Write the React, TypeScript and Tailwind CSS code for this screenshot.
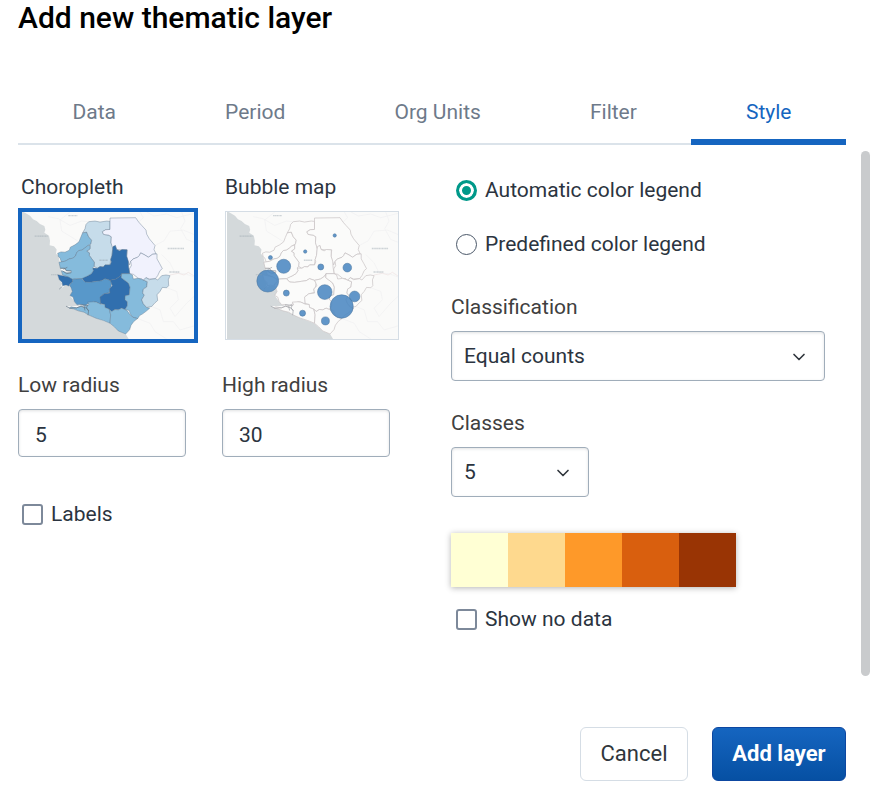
import { useState, type ReactNode } from "react";
import { ChevronDown } from "lucide-react";

type District = { name: string; fill: string; points: string };

const MID = "#85bbdc";
const DARK = "#316fae";
const LIGHT = "#c6dcea";
const PALE = "#f1f2fd";

const districts: District[] = [
  { name: "Kambia", fill: MID, points: "143,161 153,157 165,158 178,152 181,143 195,136 207,127 212,114 218,100 230,98 236,112 245,122 243,133 232,139 224,146 215,152 206,153 200,160 196,170 188,176 178,178 165,185 154,187 150,175 145,171" },
  { name: "Bombali", fill: LIGHT, points: "218,100 225,88 228,75 236,67 255,65 270,68 290,65 300,66 300,90 287,91 277,97 281,105 296,107 304,112 303,130 308,140 308,150 306,168 302,180 300,196 285,196 280,202 270,201 262,206 252,200 253,188 244,176 238,168 238,160 230,155 240,148 240,137 243,132 245,122 236,112 230,98" },
  { name: "Koinadugu", fill: PALE, points: "300,56 377,55 386,68 395,78 408,92 410,104 418,118 435,138 432,150 438,163 428,164 415,173 404,166 392,160 388,168 383,173 370,178 362,185 358,196 353,182 350,170 352,151 335,151 320,150 316,138 308,146 303,130 304,112 296,107 281,105 277,97 287,91 300,90" },
  { name: "Kono", fill: PALE, points: "383,173 388,168 392,160 404,166 415,173 428,164 441,163 441,178 449,192 457,207 450,213 443,228 436,237 418,238 408,234 400,243 395,237 385,236 370,224 359,222 358,208 364,198 362,185 370,178" },
  { name: "Tonkolili", fill: DARK, points: "308,150 309,141 316,138 320,150 329,154 336,150 351,151 350,170 355,185 356,202 359,222 335,222 330,230 318,238 300,242 285,237 275,243 260,245 240,248 225,247 215,235 232,229 244,222 250,213 248,205 262,206 270,201 280,202 285,196 300,196 304,187 302,180 306,168" },
  { name: "Port Loko", fill: MID, points: "147,188 165,185 178,178 188,176 196,170 200,160 206,153 215,152 224,146 232,139 240,137 240,148 230,155 238,160 238,168 244,176 253,188 252,200 248,205 250,213 244,222 232,229 215,237 200,237 186,239 172,231 158,226 154,213 170,219 183,219 184,214 170,213 164,206 151,206" },
  { name: "Western Area", fill: DARK, points: "143,225 158,228 175,232 187,239 188,247 180,252 177,259 168,256 158,258 156,248 148,240" },
  { name: "Moyamba", fill: "#5898ca", points: "188,247 187,239 215,237 225,247 240,248 260,245 275,243 285,237 300,242 305,250 303,262 298,268 300,278 283,282 272,290 272,313 259,307 250,306 243,311 233,312 225,318 213,314 201,315 193,305 189,292 180,287 187,275 183,264 179,258 182,251" },
  { name: "Bo", fill: DARK, points: "335,222 334,234 342,240 355,250 360,262 358,285 345,289 345,299 352,306 352,318 345,329 335,325 325,330 315,329 305,335 298,328 285,323 284,314 272,311 270,292 283,282 300,280 298,268 307,258 303,247 300,242 318,238 330,230" },
  { name: "Kenema", fill: MID, points: "335,222 359,222 367,226 370,238 385,236 400,241 412,246 410,262 400,268 398,280 403,286 395,300 400,312 410,323 419,325 410,333 398,342 389,347 383,356 368,352 360,341 358,332 345,329 352,318 352,306 345,299 345,289 358,285 360,262 355,250 342,240 334,234" },
  { name: "Kailahun", fill: LIGHT, points: "400,241 408,234 418,240 436,237 443,241 455,228 468,226 480,228 475,240 476,258 470,264 457,263 450,275 441,285 443,302 435,309 425,320 410,323 400,312 395,300 403,286 398,280 400,268 410,262 412,246" },
  { name: "Bonthe", fill: MID, points: "183,321 200,324 213,319 222,322 225,318 237,315 233,307 250,306 259,307 272,313 284,314 285,323 298,328 302,345 300,370 280,362 258,355 235,345 222,337 205,333 190,327 178,325" },
  { name: "Pujehun", fill: MID, points: "298,328 305,335 315,329 325,330 335,325 345,329 352,333 358,342 368,352 383,356 372,364 363,376 359,389 347,402 325,393 313,381 300,370 302,345" },
];

const bubbles = [
  { x: 361, y: 108, r: 5 },
  { x: 272, y: 156, r: 5 },
  { x: 167, y: 174, r: 6 },
  { x: 207, y: 200, r: 21 },
  { x: 319, y: 202, r: 9 },
  { x: 399, y: 204, r: 13 },
  { x: 159, y: 244, r: 33 },
  { x: 215, y: 280, r: 9 },
  { x: 331, y: 277, r: 22 },
  { x: 421, y: 290, r: 16 },
  { x: 382, y: 320, r: 35 },
  { x: 264, y: 340, r: 9 },
  { x: 333, y: 363, r: 12 },
];

function BaseMap({ title, children }: { title: string; children: ReactNode }) {
  return (
    <svg viewBox="36 38 516 379" preserveAspectRatio="none" role="img" aria-label={title} className="block h-full w-full">
      <rect x="36" y="36" width="516" height="384" fill="#fafaf9" />
      <path
        d="M36 36 L45 40 L60 49 L69 60 L80 65 L90 74 L103 80 L106 91 L103 100 L117 109 L120 124 L119 137 L132 140 L140 150 L138 162 L146 171 L149 188 L152 206 L158 226 L143 225 L148 240 L156 252 L150 268 L165 258 L178 258 L187 275 L180 287 L193 305 L201 315 L213 318 L168 319 L185 326 L222 337 L258 355 L300 371 L325 393 L347 402 L356 417 L36 417 Z"
        fill="#d4d9db"
      />
      <g fill="none" stroke="#f0f0f1" strokeWidth="2">
        <path d="M115 52 L145 58 L180 78 L215 65 L236 67 M180 38 L150 62 L155 95 L180 110 L207 127 M390 38 L400 55 L386 68 M410 38 L432 50 L470 44 L500 55 L552 42 M435 138 L462 124 L480 95 L520 92 L552 105" />
        <path d="M515 38 L525 65 L512 88 L530 120 L552 128 M455 165 L480 190 L495 220 L525 222 L552 232 M470 264 L500 275 L505 300 L480 325 L495 350 L530 310 L552 290 M425 320 L450 330 L460 365 L490 365 L510 390 L552 378 M383 356 L420 370 L435 395 L470 417" />
      </g>
      <path d="M480 226 L505 221 L522 226 L535 218 L552 229" fill="none" stroke="#eee2e3" strokeWidth="2" />
      {children}
      <g fill="none" stroke="#8d9ba5" strokeWidth="4" strokeDasharray="5 1 3 1" opacity="0.4">
        <path d="M175 49 H202 M473 147 H522 M478 217 H509 M268 182 H294" />
        <path d="M74 110 H113 M123 225 H143" strokeWidth="3" />
      </g>
    </svg>
  );
}

function Estuaries({ color }: { color: string }) {
  return (
    <path
      d="M151 206 L164 206 L168 213 L184 214 M160 209 L172 203 M158 214 L170 222 L184 219 M148 268 L157 260 M168 319 L180 325 L200 324 L213 319 L230 325 L235 333 M211 315 L233 316 L229 325 L236 331 L234 346 M222 320 L225 332"
      fill="none"
      stroke={color}
      strokeWidth="2"
    />
  );
}

function ChoroplethMap() {
  return (
    <BaseMap title="Choropleth preview">
      <g stroke="#5c7489" strokeOpacity="0.6" strokeWidth="2" strokeLinejoin="round">
        {districts.map((d) => (
          <polygon key={d.name} points={d.points} fill={d.fill} />
        ))}
      </g>
      <Estuaries color="#647785" />
    </BaseMap>
  );
}

function BubbleMap() {
  return (
    <BaseMap title="Bubble map preview">
      <g fill="#fbfbfa" stroke="#c5bfc1" strokeWidth="2" strokeLinejoin="round">
        {districts.map((d) => (
          <polygon key={d.name} points={d.points} />
        ))}
      </g>
      <Estuaries color="#9b9fa4" />
      <g fill="#4b87c2" fillOpacity="0.88" stroke="#4e779f" strokeOpacity="0.8" strokeWidth="2">
        {bubbles.map((b) => (
          <circle key={`${b.x}-${b.y}`} cx={b.x} cy={b.y} r={b.r} />
        ))}
      </g>
    </BaseMap>
  );
}

const tabs = ["Data", "Period", "Org Units", "Filter", "Style"];

const mapTypes = [
  { name: "Choropleth", map: <ChoroplethMap /> },
  { name: "Bubble map", map: <BubbleMap /> },
];

const palette = ["bg-[#ffffd4]", "bg-[#fed98e]", "bg-[#fe9929]", "bg-[#d95f0e]", "bg-[#993404]"];

function Checkbox({ label }: { label: string }) {
  return (
    <label className="flex items-center gap-2">
      <input
        type="checkbox"
        className="size-[21px] shrink-0 appearance-none rounded-[3px] border-2 border-[#7d899a] bg-white checked:bg-[#00897b]"
      />
      {label}
    </label>
  );
}

function Radio({ label, checked, onChange }: { label: string; checked: boolean; onChange: () => void }) {
  return (
    <label className="flex items-center gap-2">
      <input
        type="radio"
        name="legend"
        checked={checked}
        onChange={onChange}
        className="size-[21px] shrink-0 appearance-none rounded-full border border-[#4a5768] bg-white checked:border-3 checked:border-[#00998a] checked:bg-[#00998a] checked:shadow-[inset_0_0_0_3px_#fff]"
      />
      {label}
    </label>
  );
}

function NumberField({ id, label, value }: { id: string; label: string; value: string }) {
  return (
    <div className="flex w-[168px] flex-col gap-3">
      <label htmlFor={id} className="text-[#404040]">
        {label}
      </label>
      <input
        id={id}
        type="text"
        inputMode="numeric"
        defaultValue={value}
        className="h-12 w-full rounded-[4px] border border-[#a0adba] bg-white px-4 pt-[3px] shadow-[inset_0_1px_3px_rgba(48,54,60,0.15)] outline-none"
      />
    </div>
  );
}

function SelectField({ id, label, options, width }: { id: string; label: string; options: string[]; width: string }) {
  return (
    <div className="flex flex-col gap-3">
      <label htmlFor={id} className="text-[#404040]">
        {label}
      </label>
      <div className={`relative ${width}`}>
        <select
          id={id}
          className="h-[50px] w-full appearance-none rounded-[4px] border border-[#a0adba] bg-white pr-10 pl-3 shadow-[inset_0_1px_3px_rgba(48,54,60,0.15)] outline-none"
        >
          {options.map((o) => (
            <option key={o}>{o}</option>
          ))}
        </select>
        <ChevronDown
          aria-hidden="true"
          className="pointer-events-none absolute top-4 right-4 size-5 text-[#30363c]"
          strokeWidth={2}
        />
      </div>
    </div>
  );
}

export default function App() {
  const [tab, setTab] = useState("Style");
  const [mapType, setMapType] = useState("Choropleth");
  const [legend, setLegend] = useState("auto");

  return (
    <main className="bg-white pb-5 pl-[18px] font-['Roboto',sans-serif] text-[21px] leading-6 text-[#2b3440]">
      <div className="pr-9">
        <h1 className="text-[30px] leading-9 font-medium text-black">Add new thematic layer</h1>
        <div role="tablist" className="mt-[43px] flex shadow-[inset_0_-2px_0_#dbe3ea]">
          {tabs.map((t) => (
            <button
              key={t}
              role="tab"
              type="button"
              aria-selected={t === tab}
              onClick={() => setTab(t)}
              className={`flex-auto border-b-6 pt-[21px] pb-[15px] ${
                t === tab ? "border-[#1565c0] text-[#1565c0]" : "border-transparent text-[#6e7a8a]"
              }`}
            >
              {t}
            </button>
          ))}
        </div>
      </div>

      <div className="flex gap-[15px] pt-[6px] pr-3">
        <div className="grid flex-1 grid-cols-2 gap-x-[38px] pt-6 pb-[45px]">
          <section>
            <div className="flex gap-6">
              {mapTypes.map(({ name, map }) => (
                <button
                  key={name}
                  type="button"
                  aria-pressed={name === mapType}
                  onClick={() => setMapType(name)}
                  className="flex w-[180px] shrink-0 flex-col gap-[9px] text-left"
                >
                  <span className="pl-[3px]">{name}</span>
                  <span
                    className={`block h-[135px] w-full ${
                      name === mapType ? "border-4 border-[#1565c0]" : "p-[3px]"
                    }`}
                  >
                    <span className={`block h-full ${name === mapType ? "" : "border border-[#d5dde5] pl-px"}`}>
                      {map}
                    </span>
                  </span>
                </button>
              ))}
            </div>
            <div className="mt-[30px] flex gap-9">
              <NumberField id="low-radius" label="Low radius" value="5" />
              <NumberField id="high-radius" label="High radius" value="30" />
            </div>
            <div className="mt-[45px] pl-1">
              <Checkbox label="Labels" />
            </div>
          </section>

          <section className="pt-[3px] pr-[21px]">
            <div className="flex flex-col gap-[30px] pl-[5px]">
              <Radio label="Automatic color legend" checked={legend === "auto"} onChange={() => setLegend("auto")} />
              <Radio label="Predefined color legend" checked={legend === "pre"} onChange={() => setLegend("pre")} />
            </div>
            <div className="mt-[39px] flex flex-col gap-[30px]">
              <SelectField
                id="classification"
                label="Classification"
                options={["Equal counts", "Equal intervals"]}
                width="w-full"
              />
              <SelectField id="classes" label="Classes" options={["5", "3", "4", "6", "7", "8", "9"]} width="w-[138px]" />
            </div>
            <div
              role="img"
              aria-label="Color scale"
              className="mt-9 flex w-[285px] shadow-[0_1px_6px_rgba(0,0,0,0.3)]"
            >
              {palette.map((c) => (
                <span key={c} className={`h-[54px] flex-1 ${c}`} />
              ))}
            </div>
            <div className="mt-5 pl-[5px]">
              <Checkbox label="Show no data" />
            </div>
          </section>
        </div>
        <div className="w-[9px] shrink-0 rounded-full bg-[#c9cbcd]" />
      </div>

      <div className="mt-[51px] flex justify-end gap-6 pr-9 text-[22px]">
        <button type="button" className="h-[54px] w-[108px] rounded-[6px] border border-[#d5dde5] bg-white text-[#30363c]">
          Cancel
        </button>
        <button
          type="button"
          className="h-[54px] w-[134px] rounded-[6px] border border-[#0d47a1] bg-linear-to-b from-[#1565c0] to-[#0650a3] font-bold text-white"
        >
          Add layer
        </button>
      </div>
    </main>
  );
}
